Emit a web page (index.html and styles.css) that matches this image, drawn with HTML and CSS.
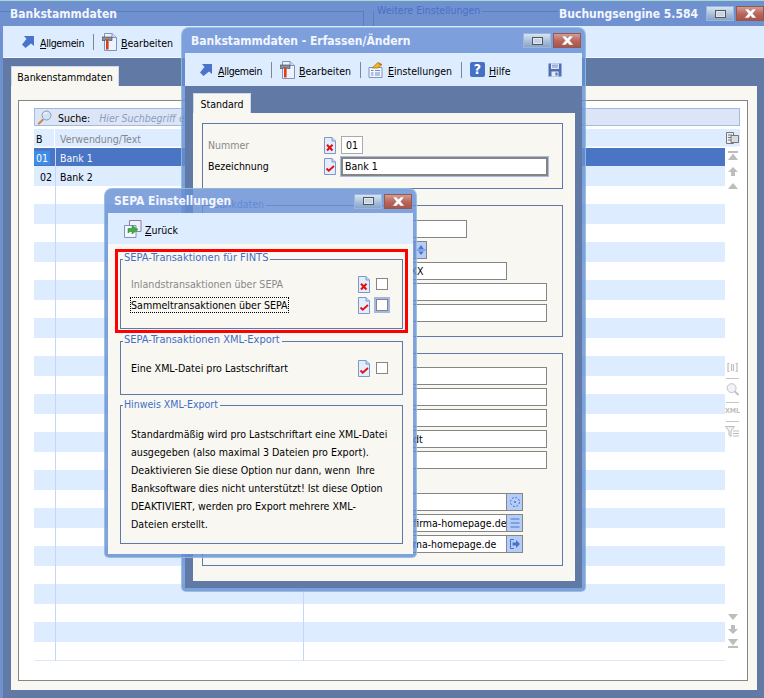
FILE: index.html
```html
<!DOCTYPE html>
<html lang="de">
<head>
<meta charset="utf-8">
<title>Bankstammdaten</title>
<link rel="stylesheet" href="styles.css">
</head>
<body>
<svg class="defs" width="0" height="0" aria-hidden="true">
  <symbol id="i-arrow" viewBox="0 0 14 13"><path d="M3 1h10v10l-3-2.500L4.500 13 1 9.500 5.500 4z" fill="#4a74cc"/></symbol>
  <symbol id="i-hammer" viewBox="0 0 15 18"><path d="M2.500.5H10l4.500 4v13h-12z" fill="#eef3fb" stroke="#7f94bd"/><path d="M10 .5v4h4.500" fill="#cfdcf2" stroke="#7f94bd"/><path d="M0 4h10v3.500H7.500V7H3v.5H0z" fill="#8a8f9a" stroke="#444" stroke-width=".6"/><rect x="4" y="7" width="2.600" height="9.500" fill="#d8401c"/></symbol>
  <symbol id="i-settings" viewBox="0 0 15 16"><path d="M1 5.500h13v10H1z" fill="#f2f6fd" stroke="#7f94bd"/><path d="M3 8.500h2.500M3 11h2.500M3 13h2.500M7 8.500h5M7 11h5M7 13h5" stroke="#6f8cc8"/><path d="M4 6 10 .5l4 2-4 3.500z" fill="#f0b820" stroke="#9a6a10" stroke-width=".7"/><path d="M11 1l3 1.500-1 1-3-1.500z" fill="#d86a20"/></symbol>
  <symbol id="i-save" viewBox="0 0 14 14"><path d="M.5.500h13v13H.5z" fill="#4f6fb4"/><rect x="3" y=".5" width="8" height="5.500" fill="#dfe7f6"/><path d="M4 2.200h6M4 4h6" stroke="#7d93c4"/><rect x="3.500" y="8.500" width="7" height="5" fill="#e6ebf6"/><rect x="7.500" y="9.500" width="2" height="3" fill="#4f6fb4"/></symbol>
  <symbol id="i-no" viewBox="0 0 14 17"><path d="M1.500.5H9l3.500 3.500v12.500h-11z" fill="#e4edfb" stroke="#7f98cc"/><path d="M9 .5V4h3.500" fill="#c8d8f2" stroke="#7f98cc"/><path d="M4 7.800l5.500 5.700M9.500 7.800 4 13.500" stroke="#e01010" stroke-width="2"/></symbol>
  <symbol id="i-yes" viewBox="0 0 14 17"><path d="M1.500.5H9l3.500 3.500v12.500h-11z" fill="#e4edfb" stroke="#7f98cc"/><path d="M9 .5V4h3.500" fill="#c8d8f2" stroke="#7f98cc"/><path d="M3.500 10.500l2.200 2.200 5.300-4.700" fill="none" stroke="#e01010" stroke-width="1.800"/></symbol>
  <symbol id="i-back" viewBox="0 0 18 18"><path d="M5.500.5h11.500v11H5.500z" fill="#eef3fb" stroke="#8a7ab0"/><path d="M.5 5.500h11.500v12H.5z" fill="#f4f7fd" stroke="#7f94bd"/><path d="M4 13V8.500h4V5.500l6 4-6 4.500v-2.500H6z" fill="#3fae3a" stroke="#2a7f2a" stroke-width=".5"/></symbol>
  <symbol id="i-search" viewBox="0 0 15 15"><path d="M5.500 9 1 13.500 2 14.500 6.500 10z" fill="#e08a30" stroke="#a85a14" stroke-width=".5"/><circle cx="9.500" cy="5.500" r="4.500" fill="#d2e2f6" stroke="#8a9bb4"/><path d="M7 4.500a3 3 0 0 1 3-2" stroke="#fff" fill="none"/></symbol>
  <symbol id="i-copy" viewBox="0 0 13 12"><path d="M.5.500h7v11h-7z" fill="#eceff4" stroke="#777"/><path d="M2 3h4M2 5.500h4M2 8h4" stroke="#777"/><path d="M5 3.500h7.500v7H5z" fill="#d8dce2" stroke="#777"/></symbol>
  <symbol id="i-first" viewBox="0 0 10 9"><rect x="0" y="0" width="10" height="2" fill="#bdbdbd"/><path d="M5 2.500 10 9H0z" fill="#bdbdbd"/></symbol>
  <symbol id="i-up" viewBox="0 0 10 9"><path d="M5 0l5 5H7v4H3V5H0z" fill="#bdbdbd"/></symbol>
  <symbol id="i-prev" viewBox="0 0 10 6"><path d="M5 0l5 6H0z" fill="#bdbdbd"/></symbol>
  <symbol id="i-next" viewBox="0 0 10 6"><path d="M0 0h10L5 6z" fill="#bdbdbd"/></symbol>
  <symbol id="i-down" viewBox="0 0 10 9"><path d="M3 0h4v4h3L5 9 0 4h3z" fill="#bdbdbd"/></symbol>
  <symbol id="i-last" viewBox="0 0 10 9"><path d="M0 0h10L5 6.500z" fill="#bdbdbd"/><rect x="0" y="7" width="10" height="2" fill="#bdbdbd"/></symbol>
  <symbol id="i-brace" viewBox="0 0 11 9"><path d="M2.500.5H1v8h1.500M8.500.5H10v8H8.500M4.500 1v7M6.500 1v7" fill="none" stroke="#bdbdbd" stroke-width="1.200"/></symbol>
  <symbol id="i-zoom" viewBox="0 0 15 14"><circle cx="6" cy="5.500" r="4.800" fill="#f2f2f8" stroke="#bdbdbd"/><path d="M9.500 9l4 4" stroke="#bdbdbd" stroke-width="2"/></symbol>
  <symbol id="i-filter" viewBox="0 0 15 11"><path d="M.5.500h9L6 5v5.500L4 9V5z" fill="#f0f0f0" stroke="#bdbdbd"/><path d="M8 5h6M8 7.500h6M8 10h6" stroke="#bdbdbd"/></symbol>
  <symbol id="i-spin" viewBox="0 0 12 13"><path d="M6 1 9 5.500H3z" fill="#4a74cc"/><path d="M1 6.500h10" stroke="#4a74cc"/><path d="M3 8h6l-3 4z" fill="#4a74cc"/></symbol>
  <symbol id="i-dots" viewBox="0 0 12 12"><circle cx="6" cy="6" r="4.500" fill="none" stroke="#4a74cc" stroke-dasharray="2 1.500"/><circle cx="6" cy="6" r="1" fill="#4a74cc"/></symbol>
  <symbol id="i-lines" viewBox="0 0 12 12"><path d="M1.500 2h9M1.500 6h9M1.500 10h9" stroke="#4a74cc"/></symbol>
  <symbol id="i-go" viewBox="0 0 12 12"><path d="M5 1.500H1.500v9H5" fill="none" stroke="#4a74cc"/><path d="M3.500 4.500H7V2l4 4-4 4V7.500H3.500z" fill="#4a74cc"/></symbol>
  <symbol id="i-x" viewBox="0 0 15 9"><path d="M1.500 0h4.200L7.500 2.200 9.300 0h4.200L9.800 4.500 13.500 9H9.300L7.500 6.800 5.700 9H1.500L5.200 4.500z" fill="#fff" stroke="#8a6a65" stroke-width=".5"/></symbol>
</svg>

<div class="desktop">

  <section class="main">
    <header class="main-title">
      <span class="bleed-line bleed-a"></span>
      <span class="bleed-line bleed-b"></span>
      <span class="bleed-line bleed-c"></span>
      <span class="bleed-line bleed-d"></span>
      <span class="bleed-text">Weitere Einstellungen</span>
      <span class="title-text">Bankstammdaten</span>
      <span class="title-text title-right">Buchungsengine 5.584</span>
      <span class="btn-min"><span class="min-glyph"></span></span>
      <span class="btn-close"><svg class="x-glyph"><use href="#i-x"/></svg></span>
    </header>
    <nav class="toolbar main-bar">
      <svg class="ic-arrow"><use href="#i-arrow"/></svg><span class="tool-label tight"><u>A</u>llgemein</span>
      <span class="tool-sep"></span>
      <svg class="ic-hammer"><use href="#i-hammer"/></svg><span class="tool-label"><u>B</u>earbeiten</span>
    </nav>
    <div class="main-body">
      <div class="tab tab-main">Bankenstammdaten</div>
      <div class="panel main-panel">
        <div class="listbox">
          <div class="searchbar">
            <svg class="ic-search"><use href="#i-search"/></svg>
            <span class="search-label">Suche:</span>
            <span class="search-hint">Hier Suchbegriff eingeben</span>
          </div>
          <div class="list-head">
            <span class="head-b">B</span>
            <span class="head-text">Verwendung/Text</span>
            <svg class="ic-copy"><use href="#i-copy"/></svg>
          </div>
          <div class="list-body">
            <div class="rows">
              <div class="list-row selected"><span class="cell-b"><span class="cell-mark">01</span></span><span class="cell-text">Bank 1</span></div>
              <div class="list-row alt"><span class="cell-b cell-right">02</span><span class="cell-text">Bank 2</span></div>
              <div class="list-row"></div><div class="list-row alt"></div>
              <div class="list-row"></div><div class="list-row alt"></div>
              <div class="list-row"></div><div class="list-row alt"></div>
              <div class="list-row"></div><div class="list-row alt"></div>
              <div class="list-row"></div><div class="list-row alt"></div>
              <div class="list-row"></div><div class="list-row alt"></div>
              <div class="list-row"></div><div class="list-row alt"></div>
              <div class="list-row"></div><div class="list-row alt"></div>
              <div class="list-row"></div><div class="list-row alt"></div>
              <div class="list-row"></div><div class="list-row alt"></div>
              <div class="list-row"></div><div class="list-row alt"></div>
              <div class="list-row"></div><div class="list-row alt"></div>
              <div class="list-row last"></div>
            </div>
            <span class="vline vline-a"></span>
            <span class="vline vline-b"></span>
            <div class="side">
              <div class="side-group side-nav">
                <svg class="ic-nav"><use href="#i-first"/></svg>
                <svg class="ic-nav"><use href="#i-up"/></svg>
                <svg class="ic-nav-s"><use href="#i-prev"/></svg>
              </div>
              <div class="side-group side-tools">
                <svg class="ic-brace"><use href="#i-brace"/></svg>
                <span class="side-rule"></span>
                <svg class="ic-zoom"><use href="#i-zoom"/></svg>
                <span class="side-rule"></span>
                <span class="side-xml">XML</span>
                <span class="side-rule"></span>
                <svg class="ic-filter"><use href="#i-filter"/></svg>
              </div>
              <div class="side-group side-nav-low">
                <svg class="ic-nav-s"><use href="#i-next"/></svg>
                <svg class="ic-nav"><use href="#i-down"/></svg>
                <svg class="ic-nav"><use href="#i-last"/></svg>
              </div>
            </div>
          </div>
        </div>
      </div>
    </div>
  </section>

  <section class="win win-edit">
    <header class="win-title">
      <span class="title-text">Bankstammdaten - Erfassen/Ändern</span>
      <span class="btn-min"><span class="min-glyph"></span></span>
      <span class="btn-close"><svg class="x-glyph"><use href="#i-x"/></svg></span>
    </header>
    <nav class="toolbar edit-bar">
      <svg class="ic-arrow"><use href="#i-arrow"/></svg><span class="tool-label tight"><u>A</u>llgemein</span>
      <span class="tool-sep"></span>
      <svg class="ic-hammer"><use href="#i-hammer"/></svg><span class="tool-label"><u>B</u>earbeiten</span>
      <span class="tool-sep"></span>
      <svg class="ic-settings"><use href="#i-settings"/></svg><span class="tool-label"><u>E</u>instellungen</span>
      <span class="tool-sep"></span>
      <span class="ic-help">?</span><span class="tool-label"><u>H</u>ilfe</span>
      <svg class="ic-save"><use href="#i-save"/></svg>
    </nav>
    <div class="edit-body">
      <div class="tab tab-std">Standard</div>
      <div class="panel edit-panel">
        <div class="group g-top">
          <div class="form-row">
            <span class="form-label muted">Nummer</span><svg class="ic-doc"><use href="#i-no"/></svg>
            <span class="field f-num">01</span>
          </div>
          <div class="form-row">
            <span class="form-label">Bezeichnung</span><svg class="ic-doc"><use href="#i-yes"/></svg>
            <span class="field f-focus">Bank 1</span>
          </div>
        </div>
        <div class="group g-bank">
          <span class="legend">Bankdaten</span>
          <div class="form-row"><span class="form-label"></span><span class="doc-gap"></span><span class="field f-126"></span></div>
          <div class="form-row"><span class="form-label"></span><span class="doc-gap"></span><span class="field f-74"></span><span class="field-btn"><svg class="ic-btn"><use href="#i-spin"/></svg></span></div>
          <div class="form-row"><span class="form-label"></span><span class="doc-gap"></span><span class="field f-166">GENODEF1XXXX</span></div>
          <div class="form-row"><span class="form-label"></span><span class="doc-gap"></span><span class="field f-206"></span></div>
          <div class="form-row"><span class="form-label"></span><span class="doc-gap"></span><span class="field f-206"></span></div>
        </div>
        <div class="group g-addr">
          <div class="form-row"><span class="form-label"></span><span class="doc-gap"></span><span class="field f-206"></span></div>
          <div class="form-row"><span class="form-label"></span><span class="doc-gap"></span><span class="field f-206"></span></div>
          <div class="form-row"><span class="form-label"></span><span class="doc-gap"></span><span class="field f-206"></span></div>
          <div class="form-row"><span class="form-label"></span><span class="doc-gap"></span><span class="field f-206">Mustergroßstadt</span></div>
          <div class="form-row"><span class="form-label"></span><span class="doc-gap"></span><span class="field f-206"></span></div>
          <div class="form-row"></div>
          <div class="form-row"><span class="form-label"></span><span class="doc-gap"></span><span class="field f-166"></span><span class="field-btn btn-wide"><svg class="ic-btn"><use href="#i-dots"/></svg></span></div>
          <div class="form-row"><span class="form-label"></span><span class="doc-gap"></span><span class="field f-166">office@meine-firma-homepage.de</span><span class="field-btn btn-wide"><svg class="ic-btn"><use href="#i-lines"/></svg></span></div>
          <div class="form-row"><span class="form-label"></span><span class="doc-gap"></span><span class="field f-166">www.meine-firma-homepage.de</span><span class="field-btn btn-wide"><svg class="ic-btn"><use href="#i-go"/></svg></span></div>
        </div>
      </div>
    </div>
  </section>

  <section class="win win-sepa">
    <header class="win-title sepa-title">
      <span class="title-text">SEPA Einstellungen</span>
      <span class="btn-min"><span class="min-glyph"></span></span>
      <span class="btn-close"><svg class="x-glyph"><use href="#i-x"/></svg></span>
    </header>
    <nav class="toolbar sepa-bar">
      <svg class="ic-back"><use href="#i-back"/></svg><span class="tool-label"><u>Z</u>urück</span>
    </nav>
    <div class="sepa-body">
      <div class="group s-fints">
        <span class="legend legend-wide">SEPA-Transaktionen für FINTS</span>
        <div class="check-row">
          <span class="check-label muted">Inlandstransaktionen über SEPA</span>
          <svg class="ic-doc"><use href="#i-no"/></svg><span class="checkbox"></span>
        </div>
        <div class="check-row">
          <span class="check-label focused">Sammeltransaktionen über SEPA</span>
          <svg class="ic-doc"><use href="#i-yes"/></svg><span class="checkbox focused-box"></span>
        </div>
      </div>
      <div class="group s-xml">
        <span class="legend legend-wide">SEPA-Transaktionen XML-Export</span>
        <div class="check-row">
          <span class="check-label">Eine XML-Datei pro Lastschriftart</span>
          <svg class="ic-doc"><use href="#i-yes"/></svg><span class="checkbox"></span>
        </div>
      </div>
      <div class="group s-note">
        <span class="legend">Hinweis XML-Export</span>
        <p class="note">Standardmäßig wird pro Lastschriftart eine XML-Datei<br>ausgegeben (also maximal 3 Dateien pro Export).<br>Deaktivieren Sie diese Option nur dann, wenn&nbsp; Ihre<br>Banksoftware dies nicht unterstützt! Ist diese Option<br>DEAKTIVIERT, werden pro Export mehrere XML-<br>Dateien erstellt.</p>
      </div>
      <div class="red-box"></div>
    </div>
  </section>

</div>
</body>
</html>
```

FILE: styles.css
```css
* { box-sizing: border-box; }
html, body { margin: 0; padding: 0; }
body {
  font-family: "DejaVu Sans Condensed", "DejaVu Sans", sans-serif;
  font-size: 10.5px;
  color: #000;
  background: #6079a5;
}
.defs { position: absolute; }
svg { display: block; flex: none; overflow: visible; }

.desktop { position: relative; width: 764px; height: 698px; overflow: hidden; }

/* main window */
.main { width: 764px; height: 698px; background: #7091d0; border-top: 1px solid #a9d8cc; display: flex; flex-direction: column; }
.main-title { position: relative; height: 25px; flex: none; display: flex; align-items: center; padding-left: 10px; gap: 2px; }
.title-text { position: relative; font-weight: bold; font-size: 12px; color: #f2f6ff; white-space: nowrap; }
.title-right { margin-left: auto; margin-right: 6px; }
.bleed-line { position: absolute; background: #5a7cc8; }
.bleed-a { left: 0; top: 10px; width: 364px; height: 1px; }
.bleed-b { left: 363px; top: 10px; width: 1px; height: 15px; }
.bleed-c { left: 373px; top: 10px; width: 1px; height: 15px; }
.bleed-d { left: 482px; top: 10px; width: 76px; height: 1px; }
.bleed-text { position: absolute; left: 377px; top: 3px; color: #4a70c6; }

.btn-min, .btn-close { width: 28px; height: 15px; flex: none; display: flex; align-items: center; justify-content: center; }
.btn-min { background: linear-gradient(#d6e4f4, #a9c0dc 55%, #88a4cc); border: 1px solid #9db6d8; }
.min-glyph { width: 11px; height: 8px; background: #c8d4e4; border: 1px solid #555; box-shadow: inset 0 0 0 1px #dde6f2; }
.btn-close { background: linear-gradient(#d89a90, #b9645a 55%, #ad5449); border: 1px solid #8e5a55; }
.x-glyph { width: 15px; height: 9px; }

.toolbar { background: #ddecff; display: flex; align-items: center; flex: none; }
.tool-label { white-space: nowrap; padding-top: 3px; }
.tool-label.tight { letter-spacing: -.35px; }
.tool-sep { width: 1px; height: 16px; background: #7d8794; flex: none; }
.ic-arrow { width: 14px; height: 13px; }
.ic-hammer { width: 15px; height: 18px; }
.ic-settings { width: 15px; height: 16px; }
.ic-save { width: 14px; height: 14px; margin-left: 37px; }
.ic-help { width: 15px; height: 15px; border-radius: 2px; background: #4470c6; color: #fff; font-weight: bold; font-size: 14px; line-height: 15px; text-align: center; flex: none; margin-right: 4px; }
.ic-back { width: 18px; height: 18px; margin-right: 3px; }

.main-bar { height: 32px; margin-left: 3px; padding-left: 18px; border-bottom: 1px solid #f2f8ff; }
.main-bar .ic-arrow { margin-right: 5px; }
.main-bar .tool-sep { margin: 0 8px 0 9px; }
.main-bar .ic-hammer { margin-right: 4px; }

.main-body { flex: 1; margin-left: 3px; background: #6079a5; padding: 8px 7px 8px 8px; display: flex; flex-direction: column; }
.tab { height: 20px; background: #f8f7f2; border: 1px solid #cfd9ea; border-bottom: 0; display: flex; align-items: center; justify-content: center; flex: none; }
.tab-main { width: 108px; }
.panel { background: #f8f7f2; flex: 1; }
.main-panel { padding: 14px 9px 9px 7px; display: flex; }
.listbox { flex: 1; background: #fff; border: 1px solid #858585; padding: 7px 7px 0 15px; }

.searchbar { height: 18px; background: #dbe5f5; border: 1px solid #a2bae2; display: flex; align-items: center; padding-left: 2px; }
.ic-search { width: 15px; height: 15px; margin-right: 6px; }
.search-label { margin-right: 9px; padding-top: 1px; }
.search-hint { font-style: italic; color: #8d9cbf; padding-top: 1px; }

.list-head { margin-top: 3px; height: 18px; display: flex; align-items: center; background: #ddecff; border-bottom: 1px solid #eef3fc; }
.head-b { width: 21px; padding: 2px 0 0 2px; border-right: 1px solid #fff; height: 100%; display: flex; align-items: center; }
.head-text { margin-left: 5px; color: #84878f; flex: 1; padding-top: 2px; }
.ic-copy { width: 13px; height: 12px; margin-right: 1px; }

.list-body { position: relative; display: flex; margin-top: 1px; }
.rows { width: 691px; flex: none; }
.list-row { height: 18px; display: flex; align-items: center; background: #fff; }
.list-row.alt { height: 20px; background: #ddecff; }
.list-row.selected { background: #4a74c4; color: #fff; }
.list-row.last { border-bottom: 1px solid #dfe6f5; height: 19px; }
.list-row.selected .cell-text { color: #f2f6ff; }
.cell-b { width: 21px; height: 100%; display: flex; align-items: center; flex: none; padding-top: 1px; }
.cell-mark { width: 16px; height: 14px; background: #3e8ce8; color: #fff; display: flex; align-items: center; justify-content: center; }
.cell-right { justify-content: flex-end; padding-right: 3px; }
.cell-text { margin-left: 5px; padding-top: 1px; }
.vline { position: absolute; top: 0; width: 1px; height: 513px; background: #c6d6f8; }
.vline-a { left: 21px; }
.vline-b { left: 269px; }

.side { width: 15px; flex: none; display: flex; flex-direction: column; align-items: center; }
.side-group { display: flex; flex-direction: column; align-items: center; }
.side-nav { margin-top: 3px; gap: 7px; }
.ic-nav { width: 10px; height: 9px; }
.ic-nav-s { width: 10px; height: 6px; }
.side-tools { margin-top: 174px; }
.ic-brace { width: 11px; height: 9px; }
.side-rule { width: 13px; height: 1px; background: #c4c4c4; margin: 6px 0 4px; }
.ic-zoom { width: 14px; height: 13px; }
.side-xml { font-size: 7px; line-height: 8px; font-weight: bold; color: #c0c0c0; height: 8px; }
.ic-filter { width: 15px; height: 11px; }
.side-nav-low { margin-top: 177px; gap: 5px; }

/* floating windows */
.win { position: absolute; display: flex; flex-direction: column; background: rgba(104, 143, 214, .82); border: 1px solid rgba(168, 220, 222, .55); border-radius: 8px 8px 5px 5px; padding: 0 3px 3px; }
.win-title { height: 25px; flex: none; display: flex; align-items: center; gap: 2px; padding: 0 1px 0 6px; }
.win-title .title-text { margin-right: auto; }

.win-edit { left: 181px; top: 27px; width: 405px; height: 565px; }
.edit-bar { height: 33px; padding-left: 14px; }
.edit-bar .ic-arrow { margin-right: 5px; }
.edit-bar .tool-sep { margin: 0 8px 0 9px; }
.edit-bar .ic-hammer { margin-right: 4px; }
.edit-bar .ic-settings { margin-right: 5px; margin-left: -1px; }
.edit-body { flex: 1; background: #6079a5; padding: 7px 7px 7px 8px; display: flex; flex-direction: column; }
.tab-std { width: 58px; }
.edit-panel { padding: 10px 12px 0 9px; display: flex; flex-direction: column; gap: 16px; }

.group { position: relative; border: 1px solid #5f78aa; flex: none; }
.legend { position: absolute; left: 2px; top: -9px; padding: 0 2px 0 1px; background: #f8f7f2; color: #3f6ec8; line-height: 14px; white-space: nowrap; }
.legend-wide { font-size: 11px; }
.g-top { height: 66px; padding: 12px 0 0 5px; }
.g-bank { height: 132px; padding: 14px 0 0 5px; }
.g-bank .legend { left: 9px; }
.g-addr { height: 213px; padding: 13px 0 0 5px; }

.form-row { display: flex; align-items: center; height: 18px; margin-bottom: 3px; }
.form-label { width: 115px; flex: none; }
.muted { color: #888; }
.ic-doc { width: 14px; height: 17px; flex: none; margin-right: 4px; }
.doc-gap { width: 18px; flex: none; }
.field { height: 18px; background: #fff; border: 1px solid #858585; padding-left: 3px; display: flex; align-items: center; white-space: nowrap; overflow: hidden; flex: none; }
.f-num { width: 22px; justify-content: center; padding: 0; border-color: #aaa; }
.f-focus { width: 207px; height: 19px; border: 2px solid #858585; box-shadow: 0 0 0 1px #a9bde4; padding-left: 2px; }
.f-126 { width: 126px; }
.f-166 { width: 166px; }
.f-206 { width: 206px; }
.f-74 { width: 74px; }
.field-btn { width: 12px; height: 18px; background: #b4ccf8; border: 1px solid #858585; border-left-width: 0; display: flex; align-items: center; justify-content: center; flex: none; overflow: hidden; }
.btn-wide { width: 16px; }
.ic-btn { width: 12px; height: 12px; }

.win-sepa { left: 104px; top: 188px; width: 313px; height: 370px; }
.sepa-title { height: 24px; padding-left: 6px; }
.sepa-bar { height: 31px; padding-left: 16px; }
.sepa-body { position: relative; flex: 1; background: #f8f7f2; padding: 15px 10px 0 12px; display: flex; flex-direction: column; }
.check-row { display: flex; align-items: center; height: 16px; margin-bottom: 5px; padding-right: 14px; }
.check-label { border: 1px dotted transparent; margin-right: auto; white-space: nowrap; height: 16px; line-height: 14px; font-size: 10.6px; }
.check-label.focused { border-color: #000; }
.check-row .ic-doc { margin-right: 5px; }
.checkbox { width: 12px; height: 12px; background: #fff; border: 1px solid #858585; flex: none; }
.focused-box { outline: 2px solid #a3b7e0; }
.s-fints { height: 70px; padding: 16px 0 0 9px; }
.s-xml { height: 54px; margin-top: 12px; padding: 18px 0 0 9px; }
.s-note { height: 139px; margin-top: 10px; padding: 19px 0 0 10px; }
.note { margin: 0; line-height: 18px; white-space: nowrap; font-size: 10.6px; }
.red-box { position: absolute; left: 7px; top: 5px; width: 293px; height: 84px; border: 3px solid #f00; }
```
